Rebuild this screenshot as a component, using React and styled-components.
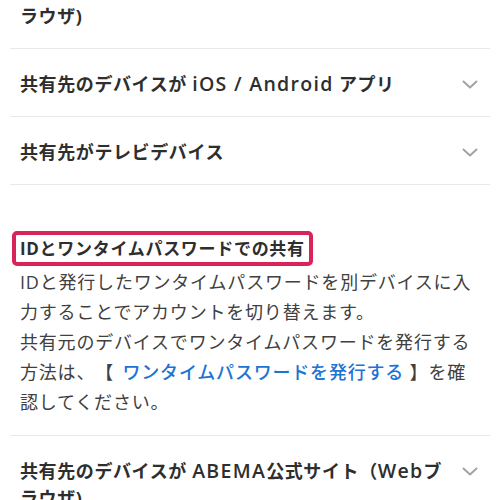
import styled, { createGlobalStyle } from 'styled-components'

const GlobalStyle = createGlobalStyle`
  html, body {
    margin: 0;
    padding: 0;
    background: #fff;
    overflow: hidden;
  }
  body {
    font-family: "Open Sans", "Noto Sans CJK JP", sans-serif;
    color: #333;
    text-spacing-trim: space-all;
  }
`

const Chevron = () => (
  <svg width="16" height="9" viewBox="0 0 16 9" fill="none">
    <polyline points="1.5,1.5 8,7.5 14.5,1.5" stroke="#a3a3a3" strokeWidth="2" strokeLinecap="round" strokeLinejoin="round" />
  </svg>
)

const AccordionItem = ({ title, open, first, children }) => (
  <Item $first={first}>
    <Header>
      <Title>{title}</Title>
      {!open && (
        <ChevronBox>
          <Chevron />
        </ChevronBox>
      )}
    </Header>
    {open && <Panel>{children}</Panel>}
  </Item>
)

const WebTitle = () => (
  <>
    共有先のデバイスが <Latin>ABEMA</Latin>公式サイト（<Latin>Web</Latin>ブラウザ)
  </>
)

const App = () => {
  return (
    <>
      <GlobalStyle />
      <Page>
        <List>
          <AccordionItem first title={<WebTitle />} />
          <AccordionItem title={<>共有先のデバイスが <Latin>iOS / Android</Latin> アプリ</>} />
          <AccordionItem title="共有先がテレビデバイス" />
          <Item>
            <Panel>
              <Marked>IDとワンタイムパスワードでの共有</Marked>
              <Body>IDと発行したワンタイムパスワードを別デバイスに入力することでアカウントを切り替えます。</Body>
              <Body>
                共有元のデバイスでワンタイムパスワードを発行する方法は、【 <Link>ワンタイムパスワードを発行する</Link> 】を確認してください。
              </Body>
            </Panel>
          </Item>
          <AccordionItem title={<WebTitle />} />
        </List>
      </Page>
    </>
  )
}
export default App

const Page = styled.div`
  width: 500px;
  height: 500px;
  overflow: hidden;
`

const List = styled.div`
  margin: 0 10px;
`

const Item = styled.section`
  border-bottom: 1px solid #e9e9e9;
  margin-top: ${p => (p.$first ? '-46px' : '0')};
`

const Header = styled.div`
  display: flex;
  align-items: flex-start;
  justify-content: space-between;
  gap: 16px;
  padding: 22px 12px 18px 10px;
`

const Title = styled.h3`
  margin: 0;
  max-width: 432px;
  font-size: 18px;
  letter-spacing: 0.6px;
  line-height: 27px;
  font-weight: 700;
  color: #2e2e2e;
`

const Latin = styled.span`
  font-family: "Open Sans", sans-serif;
  font-size: 19.5px;
  font-weight: 600;
  letter-spacing: 1.3px;
  line-height: 18px;
`

const ChevronBox = styled.div`
  flex-shrink: 0;
  height: 27px;
  display: flex;
  align-items: center;
`

const Panel = styled.div`
  padding: 46px 10px 18px 10px;
`

const Marked = styled.h4`
  display: inline-block;
  margin: 0 0 1px -8px;
  padding: 0 4px;
  border: 4px solid #d9245a;
  border-radius: 5px;
  font-size: 17px;
  letter-spacing: 0.7px;
  line-height: 27px;
  font-weight: 700;
  color: #2e2e2e;
`

const Body = styled.p`
  margin: 0;
  width: 462px;
  font-size: 18px;
  letter-spacing: 0.8px;
  line-height: 30px;
  color: #404040;
`

const Link = styled.a`
  color: #1b74d4;
  font-weight: 500;
  text-decoration: none;
  margin-left: 3px;
`
